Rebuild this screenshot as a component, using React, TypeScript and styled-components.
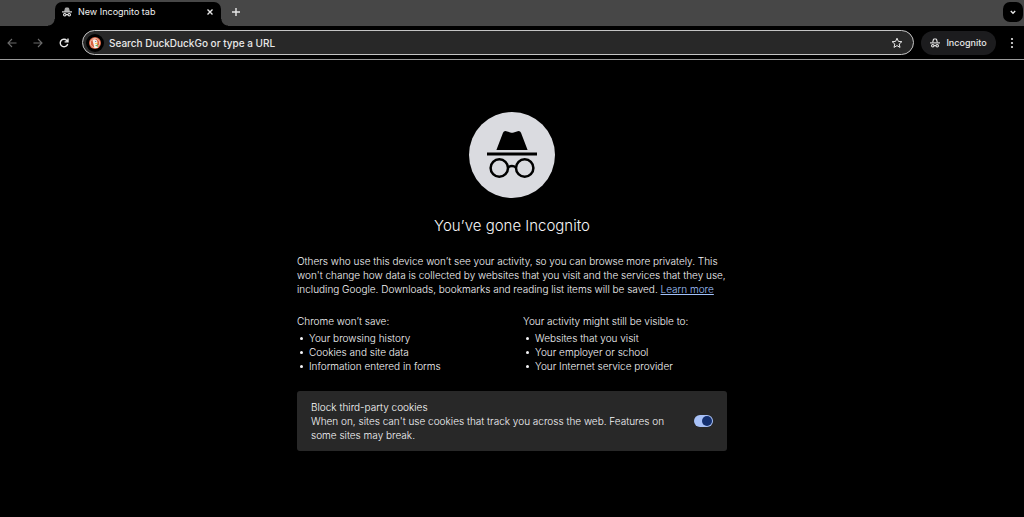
import React, { useState } from "react";
import styled, { createGlobalStyle } from "styled-components";

const GlobalStyle = createGlobalStyle`
  *, *::before, *::after { box-sizing: border-box; }
  html, body, #root { height: 100%; }
  body {
    margin: 0;
    background: #000;
    color: #f6f6f8;
    font-family: Inter, "Liberation Sans", sans-serif;
    font-size: 10px;
    font-weight: 300;
    line-height: 14px;
  }
  button, input { font: inherit; color: inherit; }
  button { padding: 0; border: 0; background: none; }
`;

const Browser = styled.div`
  display: flex;
  flex-direction: column;
  min-height: 100%;
`;

const TabStrip = styled.div`
  display: flex;
  align-items: flex-end;
  height: 26px;
  padding: 0 1px 0 48px;
  background: #474747;
`;

const Flare = styled.span<{ $side: "left" | "right" }>`
  width: 7px;
  height: 7px;
  background: radial-gradient(
    circle at ${(p) => (p.$side === "left" ? "0 0" : "100% 0")},
    transparent 6px,
    #000 7px
  );
`;

const Tab = styled.div`
  display: flex;
  align-items: center;
  width: 166px;
  height: 24px;
  padding: 0 6px 4px 7px;
  border-radius: 7px 7px 0 0;
  background: #000;
  color: #f0f0f0;
`;

const TabTitle = styled.span`
  flex: 1;
  margin-left: 6px;
  font-size: 9px;
  font-weight: 400;
`;

const IconButton = styled.button<{ $size?: number }>`
  display: grid;
  place-items: center;
  flex: none;
  width: ${(p) => p.$size ?? 20}px;
  height: ${(p) => p.$size ?? 20}px;
  color: #e8e8e8;

  &:disabled { color: #6b6b6b; }
`;

const NewTab = styled(IconButton)`
  align-self: center;
  margin: 0 auto 2px -2px;
`;

const TabSearch = styled(IconButton)`
  align-self: center;
  margin-bottom: 2px;
  border-radius: 7px;
  background: #000;
`;

const Toolbar = styled.div`
  display: flex;
  align-items: center;
  height: 34px;
  padding: 0 2px;
  border-bottom: 1px solid #9b9b9b;
`;

const NavButtons = styled.div`
  display: flex;
  gap: 6px;
  margin-right: 8px;
`;

const AddressBar = styled.label`
  display: flex;
  flex: 1;
  align-items: center;
  height: 25px;
  padding: 0 6px 0 3px;
  border: 1px solid #c4c4c4;
  border-radius: 13px;
  background: #282828;
`;

const EngineBadge = styled.span`
  display: grid;
  place-items: center;
  width: 18px;
  height: 18px;
  border-radius: 50%;
  background: #000;
`;

const AddressInput = styled.input`
  flex: 1;
  min-width: 0;
  height: 20px;
  margin-left: 5px;
  padding: 0;
  border: 0;
  outline: 0;
  background: transparent;
  font-size: 10px;
  font-weight: 500;

  &::placeholder { color: #e8e8e8; opacity: 1; }
`;

const ProfileChip = styled.button`
  display: flex;
  align-items: center;
  justify-content: center;
  gap: 6px;
  width: 75px;
  height: 24px;
  margin: 0 6px 0 7px;
  border-radius: 12px;
  background: #1c1c1e;
  color: #e8e8e8;
  font-size: 9px;
  font-weight: 500;
`;

const Page = styled.main`
  flex: 1;
  width: 100%;
  max-width: 430px;
  margin: 0 auto;
  padding: 52px 0 32px;
`;

const Hero = styled.header`
  display: flex;
  flex-direction: column;
  align-items: center;
  gap: 17px;
`;

const Title = styled.h1`
  margin: 0;
  font-size: 15px;
  font-weight: 300;
  line-height: 22px;
`;

const Intro = styled.p`
  margin: 17px -8px 18px 0;
`;

const Link = styled.a`
  color: #a0c0fa;
  text-decoration: underline;
`;

const Columns = styled.div`
  display: grid;
  grid-template-columns: 204px 1fr;
  column-gap: 22px;
`;

const Heading = styled.h2`
  margin: 0 0 3px;
  font-size: 10px;
  font-weight: 300;
`;

const List = styled.ul`
  margin: 0;
  padding: 0 0 0 3px;
  list-style: none;
`;

const Item = styled.li`
  display: flex;
  align-items: center;
  gap: 6px;

  &::before {
    content: "";
    width: 3px;
    height: 3px;
    border-radius: 50%;
    background: currentColor;
  }
`;

const CookieCard = styled.section`
  display: flex;
  align-items: center;
  justify-content: space-between;
  margin-top: 18px;
  padding: 9px 14px;
  border-radius: 3px;
  background: #282828;
`;

const CookieText = styled.label`
  width: 368px;
`;

const CookieTitle = styled.strong`
  display: block;
  color: #fff;
  font-weight: 300;
`;

const Toggle = styled.input`
  appearance: none;
  display: flex;
  align-items: center;
  justify-content: flex-start;
  flex: none;
  width: 19px;
  height: 12px;
  margin: 0;
  padding: 0 1px;
  border-radius: 6px;
  background: #7d7d7d;

  &::before {
    content: "";
    width: 10px;
    height: 10px;
    border-radius: 50%;
    background: #333;
  }
  &:checked { justify-content: flex-end; background: #a8c1f7; }
  &:checked::before { background: #14306f; }
`;

function SpyIcon({ size, soft }: { size: number; soft?: boolean }) {
  return (
    <svg width={size} height={size} viewBox="0 0 20 20" fill="none" aria-hidden="true">
      <path
        d="M5.4 8.8 6.9 3Q7.2 2 8.2 2h3.6q1 0 1.3 1l1.5 5.8"
        fill={soft ? "#a9a9a9" : "none"}
        stroke={soft ? "#a9a9a9" : "currentColor"}
        strokeWidth="2.2"
      />
      <path d="M0 9.8h20" stroke="currentColor" strokeWidth="2.2" />
      <circle cx="5.6" cy="15.4" r="2.5" stroke="currentColor" strokeWidth="2.2" />
      <circle cx="14.4" cy="15.4" r="2.5" stroke="currentColor" strokeWidth="2.2" />
      <path d="M8 15.2h4" stroke="currentColor" strokeWidth="2" />
    </svg>
  );
}

function HeroIcon() {
  return (
    <svg width="86" height="86" viewBox="0 0 86 86" role="img" aria-label="Incognito">
      <circle cx="43" cy="43" r="43" fill="#dadbe0" />
      <path
        d="M27.4 38 34 20.8q.9-2.2 3.3-1.6l4 1.2q1.7.5 3.4 0l4-1.2q2.4-.6 3.3 1.6L58.6 38z"
        fill="#000"
      />
      <path d="M18 40.5h50v3H18z" fill="#000" />
      <g fill="none" stroke="#000" strokeWidth="2.5">
        <circle cx="30.3" cy="56" r="8.7" />
        <circle cx="55.7" cy="56" r="8.7" />
        <path d="M38.8 55.5q4.2-3 8.4 0" />
      </g>
    </svg>
  );
}

function DuckIcon() {
  return (
    <svg width="12" height="12" viewBox="0 0 24 24" aria-hidden="true">
      <circle cx="12" cy="12" r="12" fill="#d9603f" />
      <circle cx="12" cy="12" r="9.4" fill="none" stroke="#f6d8cd" strokeWidth="1.6" />
      <path d="M7 6.5q2-2.5 6-1.5 4 1 4 6l-1 4 2 6q-3.5 1.5-7 .8z" fill="#f7f1ed" />
      <path d="M12 12.4q3-1.6 6-.8-1 2-5 2.3z" fill="#fdb515" />
      <path d="m12 16.5 5.5-1.6v5z" fill="#5fb35a" />
      <circle cx="13.5" cy="8.8" r="1" fill="#394a6b" />
    </svg>
  );
}

function LineIcon({ d, size, width = 1.4 }: { d: string; size: number; width?: number }) {
  return (
    <svg
      width={size}
      height={size}
      viewBox={`0 0 ${size} ${size}`}
      fill="none"
      stroke="currentColor"
      strokeWidth={width}
      aria-hidden="true"
    >
      <path d={d} />
    </svg>
  );
}

const notSaved = ["Your browsing history", "Cookies and site data", "Information entered in forms"];
const stillVisible = ["Websites that you visit", "Your employer or school", "Your Internet service provider"];

function BulletColumn({ title, items }: { title: string; items: string[] }) {
  return (
    <section>
      <Heading>{title}</Heading>
      <List>
        {items.map((item) => (
          <Item key={item}>{item}</Item>
        ))}
      </List>
    </section>
  );
}

export default function App() {
  const [blocked, setBlocked] = useState(true);
  return (
    <>
      <GlobalStyle />
      <Browser>
        <TabStrip>
          <Flare $side="left" />
          <Tab>
            <SpyIcon size={10} soft />
            <TabTitle>New Incognito tab</TabTitle>
            <IconButton $size={10} aria-label="Close tab">
              <LineIcon size={8} d="M1.5 1.5l5 5M6.5 1.5l-5 5" />
            </IconButton>
          </Tab>
          <Flare $side="right" />
          <NewTab aria-label="New tab">
            <LineIcon size={10} d="M5 1v8M1 5h8" />
          </NewTab>
          <TabSearch aria-label="Search tabs">
            <LineIcon size={8} d="M1.8 3l2.2 2.2L6.2 3" />
          </TabSearch>
        </TabStrip>
        <Toolbar>
          <NavButtons>
            <IconButton aria-label="Back" disabled>
              <LineIcon size={12} width={1.1} d="M10.5 6H2M6 2L2 6l4 4" />
            </IconButton>
            <IconButton aria-label="Forward" disabled>
              <LineIcon size={12} width={1.1} d="M1.5 6H10M6 2l4 4-4 4" />
            </IconButton>
            <IconButton aria-label="Reload">
              <LineIcon size={12} d="M9.7 7A3.8 3.8 0 1 1 8.8 3.4L10 4.6M10 1.5v3.4H6.6" />
            </IconButton>
          </NavButtons>
          <AddressBar>
            <EngineBadge>
              <DuckIcon />
            </EngineBadge>
            <AddressInput aria-label="Address" placeholder="Search DuckDuckGo or type a URL" />
            <IconButton aria-label="Bookmark this tab">
              <LineIcon
                size={12}
                width={1}
                d="M6 1.2l1.4 3.2 3.5.3-2.7 2.3.8 3.4L6 8.6l-3 1.8.8-3.4L1.1 4.7l3.5-.3z"
              />
            </IconButton>
          </AddressBar>
          <ProfileChip>
            <SpyIcon size={10} />
            Incognito
          </ProfileChip>
          <IconButton aria-label="Menu">
            <svg width="4" height="12" viewBox="0 0 4 12" fill="currentColor" aria-hidden="true">
              <circle cx="2" cy="2" r="1.1" />
              <circle cx="2" cy="6" r="1.1" />
              <circle cx="2" cy="10" r="1.1" />
            </svg>
          </IconButton>
        </Toolbar>
        <Page>
          <Hero>
            <HeroIcon />
            <Title>You’ve gone Incognito</Title>
          </Hero>
          <Intro>
            Others who use this device won’t see your activity, so you can browse more privately. This
            won't change how data is collected by websites that you visit and the services that they use,
            including Google. Downloads, bookmarks and reading list items will be saved.{" "}
            <Link href="#learn-more">Learn more</Link>
          </Intro>
          <Columns>
            <BulletColumn title="Chrome won’t save:" items={notSaved} />
            <BulletColumn title="Your activity might still be visible to:" items={stillVisible} />
          </Columns>
          <CookieCard>
            <CookieText htmlFor="block-cookies">
              <CookieTitle>Block third-party cookies</CookieTitle>
              When on, sites can't use cookies that track you across the web. Features on some sites may
              break.
            </CookieText>
            <Toggle
              id="block-cookies"
              type="checkbox"
              role="switch"
              checked={blocked}
              onChange={(e) => setBlocked(e.target.checked)}
            />
          </CookieCard>
        </Page>
      </Browser>
    </>
  );
}
